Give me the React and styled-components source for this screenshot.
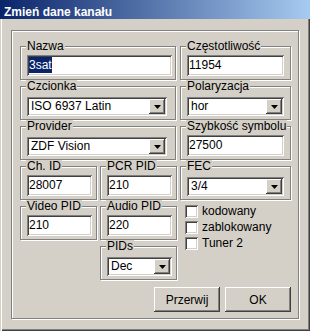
import React from "react";
import styled, { createGlobalStyle } from "styled-components";

const Global = createGlobalStyle`
  html, body { margin: 0; padding: 0; background: #D4D0C8; }
  body { font-family: "Liberation Sans", Arial, sans-serif; font-size: 12px; color: #000; }
  * { box-sizing: border-box; }
`;

const sunken = `
  box-shadow: inset 1px 1px #808080, inset -1px -1px #fff, inset 2px 2px #404040, inset -2px -2px #D4D0C8;
`;
const raised = `
  box-shadow: inset -1px -1px #404040, inset 1px 1px #fff, inset -2px -2px #808080, inset 2px 2px #D4D0C8;
`;

const Window = styled.div`
  width: 310px;
  height: 331px;
  display: flex;
  flex-direction: column;
  background: #D4D0C8;
  overflow: hidden;
`;

const TitleBar = styled.div`
  flex: none;
  height: 19px;
  padding: 6px 0 0 4px;
  background: linear-gradient(to right, #0A246A, #A6CAF0);
  color: #fff;
  font-weight: bold;
  font-size: 12px;
  line-height: 13px;
  white-space: nowrap;
`;

const Body = styled.div`
  flex: 1;
  padding: 11px 11px 0 11px;
  box-shadow: inset 1px 0 #D4D0C8, inset 2px 0 #fff, inset -1px -1px #404040, inset -2px -2px #808080;
`;

const Panel = styled.div`
  width: 288px;
  height: 289px;
  border: 1px solid #808080;
  box-shadow: inset 1px 1px #fff, 1px 1px #fff;
  padding: 9px 7px 0 8px;
  display: flex;
  flex-direction: column;
`;

const TopGrid = styled.div`
  display: grid;
  grid-template-columns: 156px 111px;
  grid-auto-rows: 40px;
  column-gap: 4px;
`;

const BottomGrid = styled.div`
  display: grid;
  grid-template-columns: 77px 77px 111px;
  grid-template-rows: repeat(3, 40px);
  grid-template-areas:
    "a b c"
    "d e f"
    ". g f";
  column-gap: 3px;
`;

const Group = styled.fieldset`
  margin: 0;
  min-width: 0;
  border: 1px solid #808080;
  box-shadow: inset 1px 1px #fff, 1px 1px #fff;
  padding: 2px 0 0 6px;
  grid-area: ${(p) => p.$area || "auto"};
`;

const Legend = styled.legend`
  padding: 0 1px;
  margin-left: -1px;
  font-size: 12px;
  line-height: 13px;
  background: #D4D0C8;
  white-space: nowrap;
`;

const TextBox = styled.div`
  width: ${(p) => p.$w}px;
  height: 21px;
  background: #fff;
  ${sunken}
  padding: 2px 2px 0 2px;
  font-size: 12px;
  line-height: 16px;
  white-space: nowrap;
  overflow: hidden;
`;

const Selected = styled.span`
  display: inline-block;
  background: #0A246A;
  color: #fff;
  line-height: 16px;
`;

const Combo = styled.div`
  width: ${(p) => p.$w}px;
  height: 19px;
  margin-top: 2px;
  background: #fff;
  ${sunken}
  padding: 2px;
  display: flex;
`;

const ComboText = styled.div`
  flex: 1;
  padding-left: 2px;
  font-size: 12px;
  line-height: 15px;
  white-space: nowrap;
  overflow: hidden;
`;

const DropButton = styled.div`
  flex: none;
  width: 16px;
  background: #D4D0C8;
  ${raised}
  display: flex;
  align-items: center;
  justify-content: center;
`;

const CheckList = styled.div`
  grid-area: f;
  display: flex;
  flex-direction: column;
  gap: 3px;
  padding: 5px 0 0 5px;
`;

const CheckRow = styled.label`
  display: flex;
  align-items: center;
  gap: 4px;
  height: 13px;
  font-size: 12px;
  line-height: 13px;
  white-space: nowrap;
`;

const CheckBox = styled.span`
  flex: none;
  width: 13px;
  height: 13px;
  background: #fff;
  ${sunken}
`;

const ButtonRow = styled.div`
  display: flex;
  justify-content: flex-end;
  gap: 5px;
  margin-top: 7px;
`;

const Button = styled.button`
  width: 66px;
  height: 25px;
  border: none;
  padding: 0;
  background: #D4D0C8;
  ${raised}
  font-family: "Liberation Sans", Arial, sans-serif;
  font-size: 12px;
  color: #000;
`;

const Arrow = () => (
  <svg width="7" height="4" viewBox="0 0 7 4">
    <polygon points="0,0 7,0 3.5,4" fill="#000" />
  </svg>
);

const Select = ({ w, value }) => (
  <Combo $w={w}>
    <ComboText>{value}</ComboText>
    <DropButton>
      <Arrow />
    </DropButton>
  </Combo>
);

export default function App() {
  return (
    <>
      <Global />
      <Window>
        <TitleBar>Zmień dane kanału</TitleBar>
        <Body>
          <Panel>
            <TopGrid>
              <Group>
                <Legend>Nazwa</Legend>
                <TextBox $w={145}>
                  <Selected>3sat</Selected>
                </TextBox>
              </Group>
              <Group>
                <Legend>Częstotliwość</Legend>
                <TextBox $w={97}>11954</TextBox>
              </Group>
              <Group>
                <Legend>Czcionka</Legend>
                <Select w={140} value="ISO 6937 Latin" />
              </Group>
              <Group>
                <Legend>Polaryzacja</Legend>
                <Select w={97} value="hor" />
              </Group>
              <Group>
                <Legend>Provider</Legend>
                <Select w={140} value="ZDF Vision" />
              </Group>
              <Group>
                <Legend>Szybkość symbolu</Legend>
                <TextBox $w={97}>27500</TextBox>
              </Group>
            </TopGrid>
            <BottomGrid>
              <Group $area="a">
                <Legend>Ch. ID</Legend>
                <TextBox $w={65}>28007</TextBox>
              </Group>
              <Group $area="b">
                <Legend>PCR PID</Legend>
                <TextBox $w={65}>210</TextBox>
              </Group>
              <Group $area="c">
                <Legend>FEC</Legend>
                <Select w={97} value="3/4" />
              </Group>
              <Group $area="d">
                <Legend>Video PID</Legend>
                <TextBox $w={65}>210</TextBox>
              </Group>
              <Group $area="e">
                <Legend>Audio PID</Legend>
                <TextBox $w={65}>220</TextBox>
              </Group>
              <CheckList>
                <CheckRow>
                  <CheckBox />
                  kodowany
                </CheckRow>
                <CheckRow>
                  <CheckBox />
                  zablokowany
                </CheckRow>
                <CheckRow>
                  <CheckBox />
                  Tuner 2
                </CheckRow>
              </CheckList>
              <Group $area="g">
                <Legend>PIDs</Legend>
                <Select w={65} value="Dec" />
              </Group>
            </BottomGrid>
            <ButtonRow>
              <Button>Przerwij</Button>
              <Button>OK</Button>
            </ButtonRow>
          </Panel>
        </Body>
      </Window>
    </>
  );
}
